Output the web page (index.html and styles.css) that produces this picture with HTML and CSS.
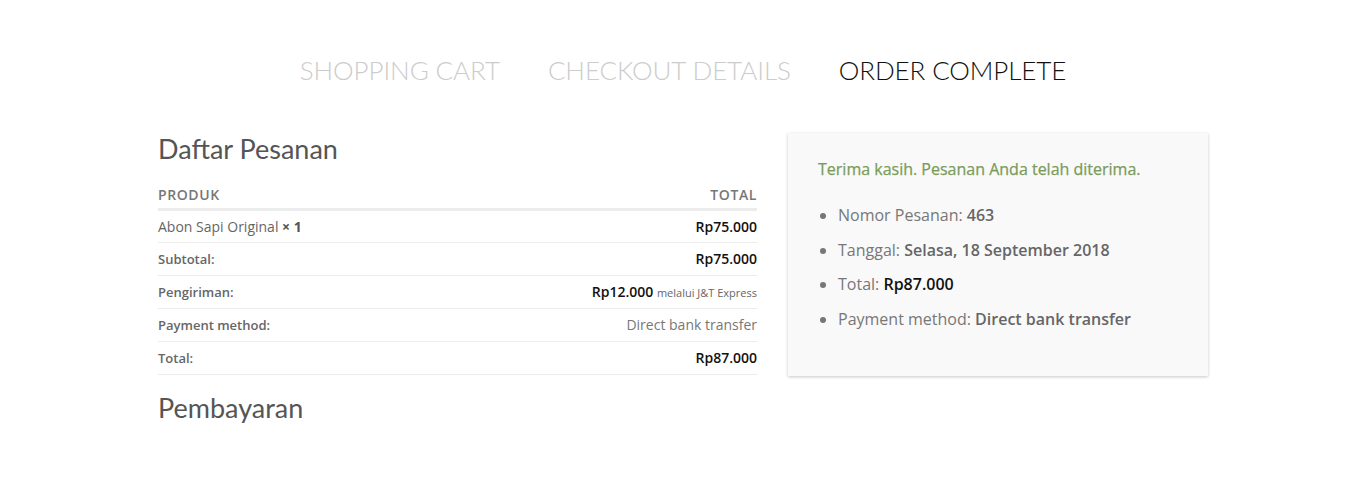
FILE: index.html
```html
<!DOCTYPE html>
<html lang="id">
<head>
<meta charset="utf-8">
<title>Order Complete</title>
<link rel="stylesheet" href="styles.css">
</head>
<body>
<nav class="steps">
  <span class="step">Shopping Cart</span>
  <span class="step">Checkout Details</span>
  <span class="step current">Order Complete</span>
</nav>
<main class="container">
  <section class="col-left">
    <h2 class="title">Daftar Pesanan</h2>
    <table class="order">
      <thead>
        <tr><th class="l">Produk</th><th class="r">Total</th></tr>
      </thead>
      <tbody>
        <tr><td class="l name">Abon Sapi Original <strong>× 1</strong></td><td class="r amt">Rp75.000</td></tr>
      </tbody>
      <tfoot>
        <tr><th class="l">Subtotal:</th><td class="r amt">Rp75.000</td></tr>
        <tr><th class="l">Pengiriman:</th><td class="r"><span class="amt">Rp12.000</span> <small>melalui J&amp;T Express</small></td></tr>
        <tr><th class="l">Payment method:</th><td class="r plain">Direct bank transfer</td></tr>
        <tr><th class="l">Total:</th><td class="r amt">Rp87.000</td></tr>
      </tfoot>
    </table>
    <h2 class="title pay">Pembayaran</h2>
  </section>
  <aside class="col-right">
    <div class="box">
      <p class="thanks">Terima kasih. Pesanan Anda telah diterima.</p>
      <ul class="details">
        <li>Nomor Pesanan: <strong>463</strong></li>
        <li>Tanggal: <strong>Selasa, 18 September 2018</strong></li>
        <li>Total: <strong class="black">Rp87.000</strong></li>
        <li>Payment method: <strong>Direct bank transfer</strong></li>
      </ul>
    </div>
  </aside>
</main>
</body>
</html>
```

FILE: styles.css
```css
* { box-sizing: border-box; }
html, body { margin: 0; padding: 0; background: #fff; }
body {
  font-family: "Open Sans", "Liberation Sans", sans-serif;
  color: #777;
  font-size: 14px;
}
.steps {
  display: flex;
  justify-content: center;
  gap: 48px;
  padding-top: 52px;
  height: 133px;
}
.step {
  font-family: Lato, "Open Sans", sans-serif;
  font-weight: 300;
  font-size: 26px;
  line-height: 36px;
  text-transform: uppercase;
  color: #ccc;
  letter-spacing: -0.1px;
}
.step.current { color: #111; }
.container {
  width: 1080px;
  margin: 0 auto;
  display: flex;
}
.col-left {
  width: 630px;
  padding: 0 16px 0 15px;
}
.col-right {
  width: 450px;
  padding: 0 15px;
}
.title {
  font-family: Lato, "Open Sans", sans-serif;
  font-weight: 400;
  font-size: 27px;
  color: #555;
  margin: 0;
  line-height: 32px;
}
.order {
  width: 100%;
  border-collapse: collapse;
  margin-top: 12px;
}
.order th, .order td {
  padding: 0;
  height: 33px;
  border-bottom: 1px solid #ececec;
  font-size: 14px;
  vertical-align: middle;
}
.order thead th {
  text-transform: uppercase;
  font-weight: 600;
  color: #777;
  letter-spacing: 0.6px;
  border-bottom: 3px solid #ececec;
  height: 32px;
  padding-top: 4px;
  padding-bottom: 0;
}
.order tfoot th {
  font-weight: 600;
  font-size: 13px;
  color: #666;
}
.l { text-align: left; }
.r { text-align: right; }
.name { color: #666; }
.name strong { font-weight: 700; color: #555; }
.amt { font-weight: 600; color: #111; }
.plain { color: #777; }
.order small { font-size: 11px; color: #666; }
.pay { margin-top: 17px; }
.box {
  background: #f9f9f9;
  box-shadow: 0 1px 3px rgba(0,0,0,0.22);
  padding: 24px 30px 30px 30px;
  height: 243px;
}
.thanks {
  margin: 0;
  color: #7a9c59;
  font-weight: 400;
  font-size: 16px;
  line-height: 24px;
  -webkit-text-stroke: 0.25px #7a9c59;
}
.details {
  margin: 22px 0 0;
  padding-left: 20px;
  font-size: 16px;
  color: #777;
  list-style: disc;
}
.details li {
  line-height: 24px;
  margin-bottom: 10.7px;
}
.details strong { font-weight: 600; color: #666; }
.details strong.black { color: #111; }
```
